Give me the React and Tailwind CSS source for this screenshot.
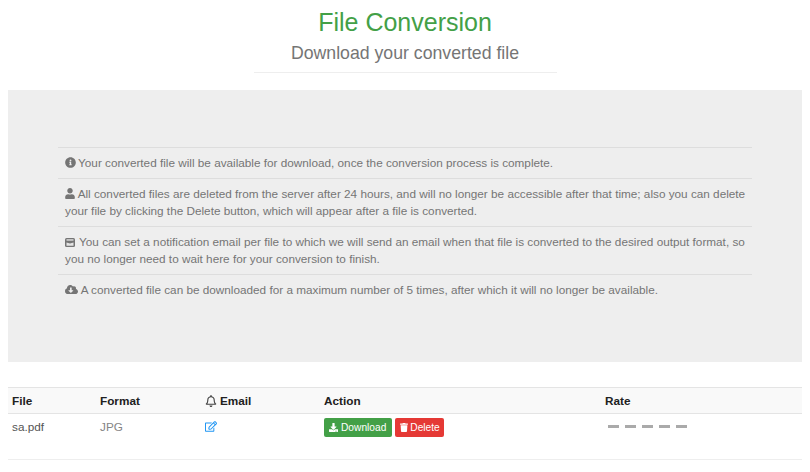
import React from 'react';
import { FaInfoCircle, FaUser, FaCloudDownloadAlt, FaRegBell, FaDownload, FaTrash, FaRegEdit } from 'react-icons/fa';

const MailIcon = () => (
  <svg viewBox="0 0 10 9" className="inline-block w-[10px] h-[9px] mr-[1px] align-[-0.5px]">
    <rect width="10" height="9" rx="1.5" fill="#757575" />
    <rect x="1.5" y="1.2" width="7" height="1.5" fill="#d8d8d8" />
    <path d="M1.5 4.4 5 5.4 8.5 4.4V7.8h-7z" fill="#e4e4e4" />
  </svg>
);

const notes = [
  { icon: <FaInfoCircle className="inline-block w-[11px] h-[11px] -mr-[1px] align-[-1px]" />, text: 'Your converted file will be available for download, once the conversion process is complete.' },
  { icon: <FaUser className="inline-block w-[10px] h-[11px] align-[-1px]" />, text: 'All converted files are deleted from the server after 24 hours, and will no longer be accessible after that time; also you can delete your file by clicking the Delete button, which will appear after a file is converted.' },
  { icon: <MailIcon />, text: 'You can set a notification email per file to which we will send an email when that file is converted to the desired output format, so you no longer need to wait here for your conversion to finish.' },
  { icon: <FaCloudDownloadAlt className="inline-block w-[13px] h-[13px] align-[-2px]" />, text: 'A converted file can be downloaded for a maximum number of 5 times, after which it will no longer be available.' },
];

const App = () => {
  return (
    <div className="w-[810px] h-[472px] bg-white overflow-hidden font-['Liberation_Sans',Arial,sans-serif]">
      {/* Header */}
      <div className="flex flex-col items-center pt-[7px]">
        <h1 className="text-[25px] leading-[30px] text-[#43a047]">File Conversion</h1>
        <h2 className="mt-[4px] text-[17.7px] leading-[24px] text-[#757575]">Download your converted file</h2>
        <hr className="mt-[7px] w-[303px] border-t border-[#eeeeee]" />
      </div>

      {/* Notes panel */}
      <div className="mx-[8px] mt-[17px] h-[272px] bg-[#eeeeee] px-[50px] pt-[57px]">
        {notes.map((note, index) => (
          <p
            key={index}
            className="border-t border-[#dddddd] pl-[7px] pr-[4px] pt-[6px] pb-[7px] text-[11.75px] leading-[17px] text-[#757575]"
          >
            {note.icon} {note.text}
          </p>
        ))}
      </div>

      {/* File table */}
      <table className="mx-[8px] mt-[25px] w-[794px] table-fixed border-collapse text-[11.75px] text-[#555555]">
        <thead>
          <tr className="h-[26px] bg-[#f9f9f9] border-t border-b border-[#e4e4e4] text-left font-bold text-[#212121]">
            <th className="w-[88px] pl-[4px]">File</th>
            <th className="w-[105px] pl-[4px]">Format</th>
            <th className="w-[119px] pl-[4px]">
              <FaRegBell className="inline-block w-[12px] h-[12px] mr-[3px] align-[-2px] text-[#424242]" />Email
            </th>
            <th className="w-[281px] pl-[4px]">Action</th>
            <th className="pl-[4px]">Rate</th>
          </tr>
        </thead>
        <tbody>
          <tr className="h-[46px] border-b border-[#eeeeee] align-top">
            <td className="pl-[4px] pt-[5px] leading-[15px]">sa.pdf</td>
            <td className="pl-[4px] pt-[5px] leading-[15px] text-[#858585]">JPG</td>
            <td className="pl-[4px] pt-[7px] leading-[15px] text-[#2196f3]">
              <FaRegEdit className="w-[12px] h-[11px]" />
            </td>
            <td className="pl-[4px] pt-[4px]">
              <div className="flex gap-[3px]">
                <button className="flex items-center gap-[3px] h-[19px] pl-[5px] pr-[6px] rounded-[2px] bg-[#43a047] text-white text-[10.2px]">
                  <FaDownload className="w-[9px] h-[9px]" />
                  Download
                </button>
                <button className="flex items-center gap-[2px] h-[19px] pl-[5px] pr-[4px] rounded-[2px] bg-[#e53935] text-white text-[10.2px]">
                  <FaTrash className="w-[8px] h-[9px]" />
                  Delete
                </button>
              </div>
            </td>
            <td className="pl-[4px] pt-[11px]">
              <div className="flex gap-[6px] ml-[3px]">
                {[0, 1, 2, 3, 4].map((i) => (
                  <span key={i} className="w-[11px] h-[3px] bg-[#aaaaaa]" />
                ))}
              </div>
            </td>
          </tr>
        </tbody>
      </table>
    </div>
  );
};

export default App;
